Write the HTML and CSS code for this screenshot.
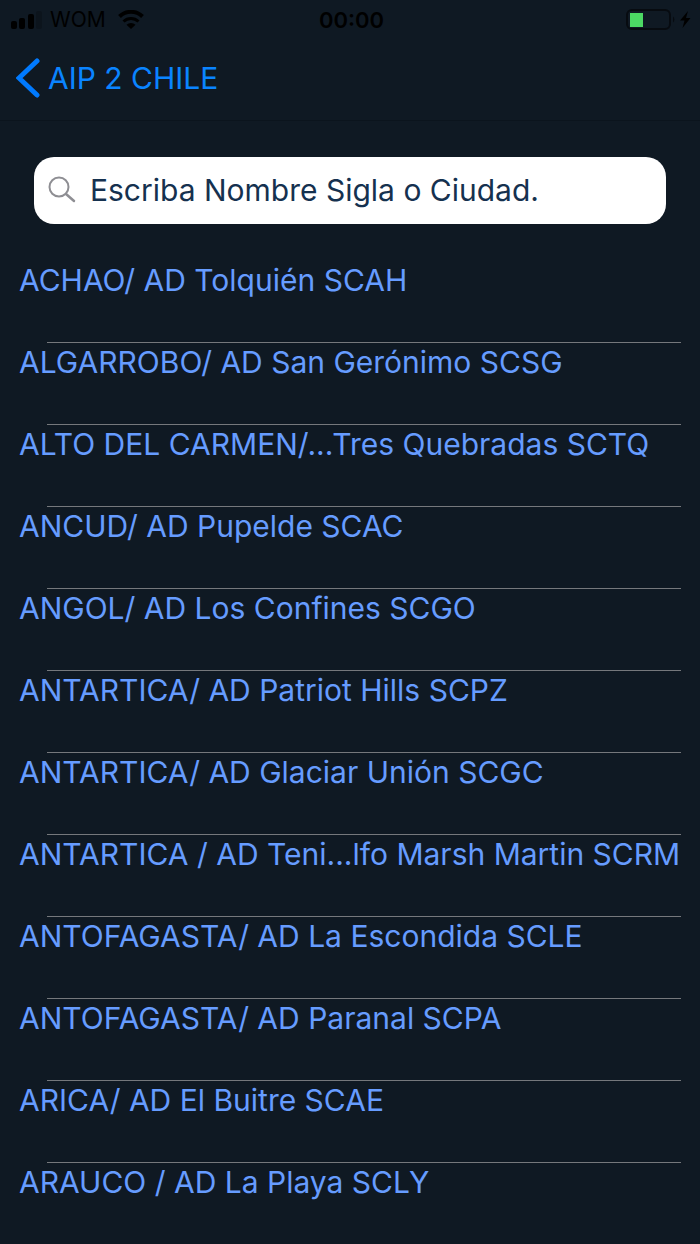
FILE: index.html
```html
<!DOCTYPE html>
<html lang="es">
<head>
    <meta charset="UTF-8">
    <meta name="viewport" content="width=device-width, initial-scale=1.0">
    <title>AIP 2 CHILE</title>
    <link rel="stylesheet" href="styles.css">
</head>
<body>
    <div class="statusbar">
        <div class="carrier">
            <svg width="32" height="20" viewBox="0 0 32 20">
                <rect x="0" y="11" width="6" height="8" rx="2"/>
                <rect x="8" y="8" width="6" height="11" rx="2"/>
                <rect x="17" y="4" width="6" height="15" rx="2"/>
                <rect x="25" y="1" width="6" height="18" rx="2" opacity="0.2"/>
            </svg>
            <span>WOM</span>
            <svg width="26" height="20" viewBox="0 0 26 20">
                <path d="M1.500 6.500a16.500 16.500 0 0 1 23 0" fill="none" stroke="#000" stroke-width="4"/>
                <path d="M5.500 11.500a11 11 0 0 1 15 0" fill="none" stroke="#000" stroke-width="3"/>
                <path d="M13 19l-4.500-4.300a6.500 6.500 0 0 1 9 0z"/>
            </svg>
        </div>
        <time class="clock">00:00</time>
        <div class="battery">
            <svg width="66" height="24" viewBox="0 0 66 24">
                <rect x="1" y="2" width="43" height="19" rx="5" fill="none" stroke="#070b10" stroke-width="2"/>
                <rect x="4" y="5" width="13" height="14" fill="#4cd964"/>
                <path d="M47 8.500a4 4 0 0 1 0 6z" fill="#070b10"/>
                <path d="M62 3l-8 9.500h4.500l-2 7.500 8-10h-4.500z"/>
            </svg>
        </div>
    </div>

    <header class="navbar">
        <a class="back" href="#">
            <svg width="24" height="40" viewBox="0 0 24 40">
                <path d="M21 3L3 20l18 17" fill="none" stroke="#007aff" stroke-width="5" stroke-linecap="round" stroke-linejoin="miter"/>
            </svg>
            <span>AIP 2 CHILE</span>
        </a>
    </header>

    <main>
        <label class="search">
            <svg width="28" height="28" viewBox="0 0 28 28" aria-hidden="true">
                <circle cx="11" cy="11" r="9.500" fill="none" stroke="#8e8e93" stroke-width="2"/>
                <path d="M18 18l8 7" stroke="#8e8e93" stroke-width="2.500" stroke-linecap="round"/>
            </svg>
            <input type="text" placeholder="Escriba Nombre Sigla o Ciudad." aria-label="Escriba Nombre Sigla o Ciudad.">
        </label>

        <ul class="list">
            <li><a href="#">ACHAO/ AD Tolquién SCAH</a></li>
            <li><a href="#">ALGARROBO/ AD San Gerónimo SCSG</a></li>
            <li><a href="#">ALTO DEL CARMEN/...Tres Quebradas SCTQ</a></li>
            <li><a href="#">ANCUD/ AD Pupelde SCAC</a></li>
            <li><a href="#">ANGOL/ AD Los Confines SCGO</a></li>
            <li><a href="#">ANTARTICA/ AD Patriot Hills SCPZ</a></li>
            <li><a href="#">ANTARTICA/ AD Glaciar Unión SCGC</a></li>
            <li><a href="#">ANTARTICA / AD Teni...lfo Marsh Martin SCRM</a></li>
            <li><a href="#">ANTOFAGASTA/ AD La Escondida SCLE</a></li>
            <li><a href="#">ANTOFAGASTA/ AD Paranal SCPA</a></li>
            <li><a href="#">ARICA/ AD El Buitre SCAE</a></li>
            <li><a href="#">ARAUCO / AD La Playa SCLY</a></li>
        </ul>
    </main>
</body>
</html>
```
FILE: styles.css
```css
* {
    box-sizing: border-box;
}

body {
    margin: 0;
    background-color: #0f1923;
    font-family: Inter, "Liberation Sans", sans-serif;
    font-size: 30px;
}

a {
    color: inherit;
    text-decoration: none;
}

svg {
    display: block;
    flex: none;
}

/* Status bar */
.statusbar {
    display: grid;
    grid-template-columns: 1fr auto 1fr;
    align-items: center;
    height: 39px;
    padding: 0 8px 0 11px;
    color: #000;
    font-size: 22px;
}

.carrier {
    display: flex;
    align-items: center;
    gap: 7px;
}

.carrier span {
    margin-right: 5px;
    font-size: 21px;
}

.clock {
    font-weight: 600;
}

.battery {
    display: flex;
    justify-content: flex-end;
}

/* Navigation bar */
.navbar {
    height: 82px;
    border-bottom: 1px solid #0b141d;
}

.back {
    display: inline-flex;
    align-items: center;
    gap: 8px;
    height: 78px;
    padding-left: 16px;
    color: #0a84ff;
}

/* Search box */
.search {
    display: flex;
    align-items: center;
    gap: 14px;
    height: 67px;
    margin: 36px 34px 37px;
    padding: 0 14px 2px;
    border-radius: 20px;
    background-color: #fff;
}

.search input {
    flex: 1;
    min-width: 0;
    padding: 0;
    border: none;
    outline: none;
    background: none;
    color: #15314f;
    font: inherit;
}

.search input::placeholder {
    color: #15314f;
    opacity: 1;
}

/* Aerodrome list */
.list {
    margin: 0;
    padding: 0 19px;
    list-style: none;
    color: #669cff;
}

.list a {
    display: block;
    height: 81px;
    line-height: 38px;
    white-space: nowrap;
}

/* the separator starts further in than the text */
.list li:not(:last-child)::after {
    content: "";
    display: block;
    height: 1px;
    margin-left: 28px;
    background-color: #75787c;
}
```
